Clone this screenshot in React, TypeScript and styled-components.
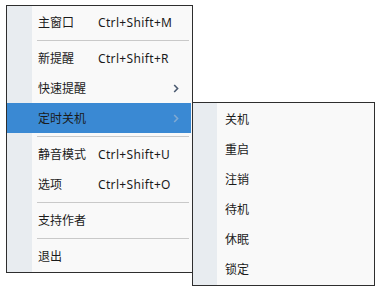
import styled, { createGlobalStyle } from "styled-components";

const GlobalStyle = createGlobalStyle`
    html, body {
        margin: 0;
        padding: 0;
        background: #ffffff;
    }
    body {
        font-family: "Noto Sans", "Noto Sans CJK SC", sans-serif;
        font-size: 12px;
        color: #1b1b1b;
    }
`

type Item =
    | { kind: "item"; label: string; shortcut?: string; submenu?: boolean; active?: boolean }
    | { kind: "sep" };

const mainItems: Item[] = [
    { kind: "item", label: "主窗口", shortcut: "Ctrl+Shift+M" },
    { kind: "sep" },
    { kind: "item", label: "新提醒", shortcut: "Ctrl+Shift+R" },
    { kind: "item", label: "快速提醒", submenu: true },
    { kind: "item", label: "定时关机", submenu: true, active: true },
    { kind: "sep" },
    { kind: "item", label: "静音模式", shortcut: "Ctrl+Shift+U" },
    { kind: "item", label: "选项", shortcut: "Ctrl+Shift+O" },
    { kind: "sep" },
    { kind: "item", label: "支持作者" },
    { kind: "sep" },
    { kind: "item", label: "退出" },
];

const shutdownItems = ["关机", "重启", "注销", "待机", "休眠", "锁定"];

function Chevron(props: { faded?: boolean }) {
    return (
        <ArrowIcon width="6" height="9" viewBox="0 0 6 9">
            <path d="M1.2 1 L4.6 4.5 L1.2 8" fill="none" stroke={props.faded ? "#7fa9d2" : "#4a5a70"} strokeWidth="1.6" />
        </ArrowIcon>
    )
}

export default function App() {
    return (
        <>
            <GlobalStyle />
            <Page>
                <MenuPanel>
                    {mainItems.map((item, i) =>
                        item.kind === "sep" ? (
                            <Separator key={i} />
                        ) : (
                            <MenuRow key={i} $active={item.active}>
                                <RowLabel>{item.label}</RowLabel>
                                {item.shortcut && <Shortcut>{item.shortcut}</Shortcut>}
                                {item.submenu && <Chevron faded={item.active} />}
                                {item.active && (
                                    <SubMenu>
                                        {shutdownItems.map((s) => (
                                            <SubRow key={s}>{s}</SubRow>
                                        ))}
                                    </SubMenu>
                                )}
                            </MenuRow>
                        )
                    )}
                </MenuPanel>
            </Page>
        </>
    )
}

const Page = styled.div`
    padding: 5px 0 0 6px;
    width: 389px;
    height: 298px;
    box-sizing: border-box;
`

const MenuPanel = styled.div`
    width: 187px;
    box-sizing: border-box;
    border: 1px solid #2e2e2e;
    padding: 1px 0;
    background: linear-gradient(to right, #e8ecf0 25px, #f9f9f9 25px);
    display: flex;
    flex-direction: column;
`

const MenuRow = styled.div<{ $active?: boolean }>`
    position: relative;
    display: flex;
    align-items: center;
    height: 30px;
    margin-right: 1px;
    padding-left: 31px;
    color: #1b1b1b;
    background: ${(p) => (p.$active ? "#3a89d3" : "transparent")};
`

const RowLabel = styled.span`
    width: 60px;
    flex: none;
`

const Shortcut = styled.span`
    flex: none;
    letter-spacing: 0.35px;
`

const ArrowIcon = styled.svg`
    margin-left: auto;
    margin-right: 12px;
`

const Separator = styled.div`
    height: 6px;
    margin: 0 3px 0 30px;
    display: flex;
    align-items: center;

    &::after {
        content: "";
        flex: 1;
        height: 1px;
        background: #c9c9c9;
    }
`

const SubMenu = styled.div`
    position: absolute;
    left: calc(100% + 1px);
    top: -1px;
    width: 183px;
    box-sizing: border-box;
    border: 1px solid #2e2e2e;
    padding: 1px 0 1px;
    background: linear-gradient(to right, #e8ecf0 24px, #f9f9f9 24px);
    display: flex;
    flex-direction: column;
`

const SubRow = styled.div`
    height: 30px;
    display: flex;
    align-items: center;
    padding-left: 32px;
    color: #1b1b1b;
`
